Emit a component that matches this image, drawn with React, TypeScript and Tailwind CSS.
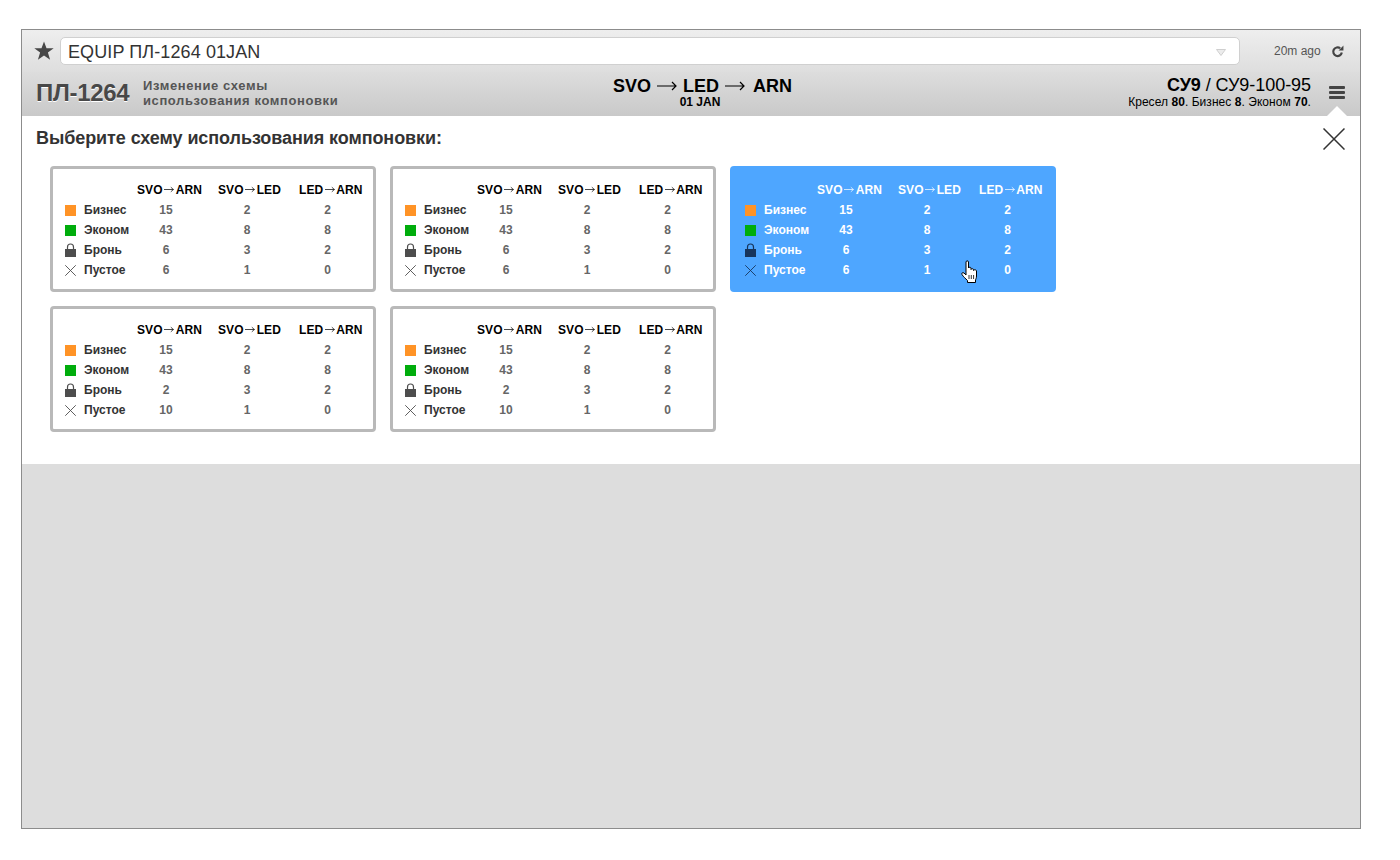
const schemes = [
  { reserved: [6, 3, 2], empty: [6, 1, 0] },
  { reserved: [6, 3, 2], empty: [6, 1, 0] },
  { reserved: [6, 3, 2], empty: [6, 1, 0], active: true },
  { reserved: [2, 3, 2], empty: [10, 1, 0] },
  { reserved: [2, 3, 2], empty: [10, 1, 0] },
];

const legs = [
  ["SVO", "ARN"],
  ["SVO", "LED"],
  ["LED", "ARN"],
];

const SmallArrow = () => (
  <svg width="10" height="7" viewBox="0 0 10 7" className="mx-[1.5px] mb-[2px] inline-block" fill="none" stroke="currentColor">
    <path d="M0 3.5h9.500M6.800 1.200l2.600 2.300-2.600 2.300" strokeWidth="0.9" opacity="0.8" />
  </svg>
);

const BigArrow = () => (
  <svg width="20" height="10" viewBox="0 0 20 10" className="mx-[6px] inline-block" fill="none" stroke="currentColor">
    <path d="M0 5h19M15 1l4 4-4 4" strokeWidth="1.2" />
  </svg>
);

const Lock = ({ color }: { color: string }) => (
  <svg width="11" height="14" viewBox="0 0 11 14">
    <path d="M2.5 7V4a3 3 0 0 1 6 0v3" fill="none" stroke={color} strokeWidth="1.2" />
    <rect x="0" y="6" width="11" height="8" fill={color} />
  </svg>
);

const Cross = ({ color, size, width }: { color: string; size: number; width: number }) => (
  <svg width={size} height={size} viewBox="0 0 22 22" fill="none" stroke={color} strokeWidth={width}>
    <path d="M0.5 0.5l21 21M21.5 0.5l-21 21" />
  </svg>
);

const Hand = () => (
  <svg width="17" height="23" viewBox="0 0 17 23" className="absolute left-[228px] top-[91px]">
    <path
      d="M5 2C5 .5 7.500 .5 7.500 2V8C7.500 7 10 7 10 8V9.500C10 8.500 12.500 8.500 12.500 9.500V10.500C12.500 9.500 15.500 9.500 15.500 11V16C15.500 18 14.800 19 14.500 20V22.500H6.500V20.500C4.500 18.500 2.500 17 1 14.500C.3 13.300 1.500 12 3 13L5 15Z"
      fill="#fff"
      stroke="#000"
      strokeWidth="1"
      strokeLinejoin="round"
    />
    <path d="M8 15v4M10.300 15v4M12.600 15v4" stroke="#000" strokeWidth="0.800" />
  </svg>
);

const SchemeCard = ({ reserved, empty, active }: { reserved: number[]; empty: number[]; active?: boolean }) => {
  const iconColor = active ? "#17355c" : "#4d4d4d";
  const rows = [
    { label: "Бизнес", values: [15, 2, 2], icon: <div className="h-[11px] w-[11px] bg-[#ff9326]" /> },
    { label: "Эконом", values: [43, 8, 8], icon: <div className="h-[11px] w-[11px] bg-[#00ad0c]" /> },
    { label: "Бронь", values: reserved, icon: <Lock color={iconColor} /> },
    { label: "Пустое", values: empty, icon: <Cross color={iconColor} size={11} width={1.8} /> },
  ];

  return (
    <div
      className={`relative h-[126px] rounded-[4px] border-[3px] pl-[12px] pt-[11px] ${
        active ? "border-[#4ea6ff] bg-[#4ea6ff]" : "border-[#b9b9b9] bg-white"
      }`}
    >
      <div className={`ml-[72px] flex h-[20px] text-[12px] font-bold tracking-[0.1px] ${active ? "text-white" : "text-black"}`}>
        {legs.map(([from, to]) => (
          <div key={from + to} className="flex w-[81px] shrink-0 items-center whitespace-nowrap">
            {from}
            <SmallArrow />
            {to}
          </div>
        ))}
      </div>
      {rows.map((row) => (
        <div key={row.label} className="flex h-[20px] items-center text-[12px] font-bold">
          <div className="flex w-[19px] shrink-0 justify-start">{row.icon}</div>
          <div className={`w-[53px] shrink-0 ${active ? "text-white" : "text-[#333333]"}`}>{row.label}</div>
          {row.values.map((value, i) => (
            <div key={i} className="w-[81px] shrink-0">
              <div className={`text-center ${i === 2 ? "w-[57px]" : "w-[58px]"} ${active ? "text-white" : "text-[#666666]"}`}>{value}</div>
            </div>
          ))}
        </div>
      ))}
      {active && <Hand />}
    </div>
  );
};

export default function App() {
  return (
    <div className="h-[860px] w-[1400px] overflow-hidden bg-white pl-[21px] pt-[29px] font-['Liberation_Sans',Arial,sans-serif] antialiased">
      <div className="flex h-[800px] w-[1340px] flex-col border border-[#8c8c8c] bg-[#dddddd]">
        {/* Command bar */}
        <div className="flex h-[42px] items-center bg-gradient-to-b from-[#eeeeee] to-[#dedede] pl-[12px] pr-[16px]">
          <svg width="20" height="20" viewBox="0 0 20 20" fill="#474747" className="shrink-0">
            <path d="M10 0.500l2.500 6.700h7.200l-5.800 4.400 2.200 7.200L10 14.500l-6.100 4.300 2.200-7.200L0.300 7.200h7.200z" />
          </svg>
          <div className="ml-[6px] flex h-[28px] w-[1180px] items-center justify-between rounded-[5px] border border-[#d0d0d0] bg-white pl-[7px] pr-[13px] pt-[2px] text-[18px] tracking-[0.1px] text-[#333333]">
            <span>EQUIP ПЛ-1264 01JAN</span>
            <svg width="10" height="7" viewBox="0 0 10 7" fill="#ececec" stroke="#cfcfcf">
              <path d="M0.500 0.500h9L5 6.500z" />
            </svg>
          </div>
          <span className="ml-[34px] text-[12px] text-[#555555]">20m ago</span>
          <svg width="13" height="13" viewBox="0 0 24 24" fill="none" stroke="#444444" strokeWidth="4" className="ml-auto">
            <path d="M20 14a8 8 0 1 1-3-8" />
            <path d="M23 1v9h-9z" fill="#444444" stroke="none" />
          </svg>
        </div>

        {/* Flight header */}
        <div className="relative flex h-[44px] items-center bg-gradient-to-b from-[#dddddd] to-[#c9c9c9] pl-[14px] pr-[15px]">
          <div className="-mt-[2px] w-[107px] text-[24px] font-bold tracking-[-0.3px] text-[#484848] [text-shadow:0_1px_0_#ffffff]">ПЛ-1264</div>
          <div className="-mt-[2px] text-[13px] font-bold leading-[15px] tracking-[0.6px] text-[#555555]">
            <div>Изменение схемы</div>
            <div>использования компоновки</div>
          </div>
          <div className="absolute left-[591px] top-[3px] text-black">
            <div className="flex items-center text-[18px] font-bold leading-[22px]">
              SVO
              <BigArrow />
              LED
              <BigArrow />
              <span className="ml-[2px]">ARN</span>
            </div>
            <div className="-mt-[1px] pr-[5px] text-center text-[12px] font-bold leading-[13px]">01 JAN</div>
          </div>
          <div className="ml-auto mr-[18px] -mt-[4px] text-right text-black">
            <div className="text-[18px] leading-[19px] tracking-[-0.05px]">
              <b>СУ9</b> / СУ9-100-95
            </div>
            <div className="text-[12px] leading-[14px] tracking-[0.05px]">
              Кресел <b>80</b>. Бизнес <b>8</b>. Эконом <b>70</b>.
            </div>
          </div>
          <div className="-mt-[4px] flex w-[16px] flex-col gap-[2px]">
            <div className="h-[3px] rounded-[1px] bg-[#444444]" />
            <div className="h-[3px] rounded-[1px] bg-[#444444]" />
            <div className="h-[3px] rounded-[1px] bg-[#444444]" />
          </div>
          <div className="absolute bottom-0 right-[13px] h-0 w-0 border-x-[10px] border-b-[10px] border-x-transparent border-b-white" />
        </div>

        {/* Scheme picker */}
        <div className="relative h-[348px] bg-white pl-[14px] pt-[13px]">
          <h2 className="text-[18px] font-bold leading-[18px] tracking-[-0.08px] text-[#333333]">Выберите схему использования компоновки:</h2>
          <div className="ml-[14px] mt-[19px] grid w-[1006px] grid-cols-3 gap-[14px]">
            {schemes.map((scheme, i) => (
              <SchemeCard key={i} {...scheme} />
            ))}
          </div>
          <div className="absolute right-[15px] top-[12px]">
            <Cross color="#333333" size={22} width={1.5} />
          </div>
        </div>
      </div>
    </div>
  );
}
